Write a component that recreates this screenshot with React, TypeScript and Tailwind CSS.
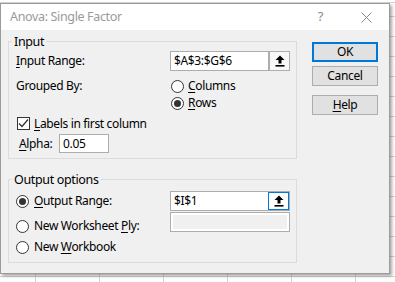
import React from 'react';

const Radio = ({ checked }: { checked?: boolean }) => (
  <span className="w-[13px] h-[13px] rounded-full border border-[#333333] bg-white flex items-center justify-center shrink-0">
    {checked && <span className="w-[7px] h-[7px] rounded-full bg-[#333333]" />}
  </span>
);

const UpArrow = () => (
  <svg width="10" height="12" viewBox="0 0 10 12">
    <path d="M5 0.5 L9.5 5 L6.5 5 L6.5 8.5 L3.5 8.5 L3.5 5 L0.5 5 Z" fill="#000" />
    <rect x="0.5" y="10" width="9" height="1.6" fill="#000" />
  </svg>
);

const RefEdit = ({ value, focused }: { value: string; focused?: boolean }) => (
  <div className="w-[120px] h-[20px] border border-[#adadad] bg-white flex">
    <div className="flex-1 pl-[3px] leading-[18px]">{value}</div>
    <div
      className={
        focused
          ? 'w-[21px] h-full flex items-center justify-center border border-[#0078d7] bg-white'
          : 'w-[21px] h-full flex items-center justify-center border-l-2 border-[#adadad] bg-[#f7f7f7]'
      }
    >
      <UpArrow />
    </div>
  </div>
);

const U = ({ children }: { children: React.ReactNode }) => <span className="underline underline-offset-2">{children}</span>;

const Button = ({ children, primary }: { children: React.ReactNode; primary?: boolean }) => (
  <div
    className={
      primary
        ? 'w-[66px] h-[20px] border-2 border-[#0078d7] bg-[#e1e1e1] flex items-center justify-center'
        : 'w-[66px] h-[20px] border border-[#adadad] bg-[#e1e1e1] flex items-center justify-center'
    }
  >
    {children}
  </div>
);

export default function App() {
  return (
    <div className="relative w-[395px] h-[282px] overflow-hidden bg-white font-['Noto_Sans',sans-serif] text-[12px] tracking-[-0.35px] text-black">
      {/* spreadsheet behind */}
      <div className="flex flex-col h-full">
        <div className="h-[3px] overflow-hidden relative text-[11px] text-[#444] border-b border-[#d4d4d4]">
          <div className="flex -mt-[11px] leading-[14px]">
            <span className="ml-[2px]">ults</span>
            <span className="ml-[289px]">Data Tools</span>
          </div>
        </div>
        <div className="flex-1 [background-image:linear-gradient(to_right,#d4d4d4_1px,transparent_1px),linear-gradient(to_bottom,#d4d4d4_1px,transparent_1px)] [background-size:64px_20px] [background-position:35px_13px]" />
      </div>

      {/* dialog */}
      <div className="absolute left-0 top-[3px] w-[390px] h-[271px] border border-[#9b9b9b] bg-[#f0f0f0] flex flex-col shadow-[2px_2px_3px_rgba(0,0,0,0.35)]">
        <div className="h-[26px] bg-white flex items-center shrink-0">
          <span className="ml-[9px] text-[#9a9a9a] text-[12.5px]">Anova: Single Factor</span>
          <span className="ml-auto mr-[38px] text-[#8a8a8a] text-[13px]">?</span>
          <svg width="11" height="11" viewBox="0 0 11 11" className="mr-[17px]">
            <path d="M0.5 0.5 L10.5 10.5 M10.5 0.5 L0.5 10.5" stroke="#8a8a8a" strokeWidth="1" />
          </svg>
        </div>

        <div className="flex flex-1">
          {/* left column */}
          <div className="pl-[7px] pt-[11px]">
            {/* Input group */}
            <div className="w-[289px] h-[118px] border border-[#dcdcdc] flex flex-col">
              <div className="-mt-[8px] ml-[3px] px-[2px] w-fit bg-[#f0f0f0] leading-[15px] text-[12.5px]">Input</div>
              <div className="mt-[2px] h-[20px] flex items-center pl-[7px]">
                <span className="w-[154px]">
                  <U>I</U>nput Range:
                </span>
                <RefEdit value="$A$3:$G$6" />
              </div>
              <div className="mt-[7px] h-[16px] flex items-center pl-[7px]">
                <span className="w-[155px]">Grouped By:</span>
                <Radio />
                <span className="ml-[4px]">
                  <U>C</U>olumns
                </span>
              </div>
              <div className="mt-[1px] h-[16px] flex items-center pl-[162px]">
                <Radio checked />
                <span className="ml-[4px]">
                  <U>R</U>ows
                </span>
              </div>
              <div className="mt-[4px] h-[17px] flex items-center pl-[8px]">
                <span className="w-[13px] h-[13px] border border-[#333333] bg-white flex items-center justify-center">
                  <svg width="11" height="11" viewBox="0 0 11 11">
                    <path d="M1 5.5 L4 8.5 L10 1.5" stroke="#333" strokeWidth="1.3" fill="none" />
                  </svg>
                </span>
                <span className="ml-[4px]">
                  <U>L</U>abels in first column
                </span>
              </div>
              <div className="mt-[2px] h-[19px] flex items-center pl-[10px]">
                <span className="w-[40px]">
                  <U>A</U>lpha:
                </span>
                <div className="w-[50px] h-[19px] border border-[#adadad] bg-white pl-[3px] leading-[17px]">0.05</div>
              </div>
            </div>

            {/* Output group */}
            <div className="mt-[20px] w-[289px] h-[84px] border border-[#dcdcdc] flex flex-col">
              <div className="-mt-[8px] ml-[3px] px-[2px] w-fit bg-[#f0f0f0] leading-[15px] text-[12.5px]">Output options</div>
              <div className="mt-[4px] h-[20px] flex items-center pl-[7px]">
                <div className="w-[154px] flex items-center">
                  <Radio checked />
                  <span className="ml-[5px]">
                    <U>O</U>utput Range:
                  </span>
                </div>
                <RefEdit value="$I$1" focused />
              </div>
              <div className="mt-[1px] h-[20px] flex items-start pl-[7px]">
                <div className="w-[154px] h-[16px] mt-[6px] flex items-center">
                  <Radio />
                  <span className="ml-[5px]">
                    New Worksheet <U>P</U>ly:
                  </span>
                </div>
                <div className="w-[120px] h-[20px] border border-[#adadad] bg-white p-[2px]">
                  <div className="w-full h-full bg-[#f0f0f0]" />
                </div>
              </div>
              <div className="mt-[7px] h-[16px] flex items-center pl-[7px]">
                <Radio />
                <span className="ml-[5px]">
                  New <U>W</U>orkbook
                </span>
              </div>
            </div>
          </div>

          {/* right column */}
          <div className="ml-[15px] pt-[12px] flex flex-col">
            <Button primary>OK</Button>
            <div className="mt-[4px]">
              <Button>Cancel</Button>
            </div>
            <div className="mt-[9px]">
              <Button>
                <span>
                  <U>H</U>elp
                </span>
              </Button>
            </div>
          </div>
        </div>
      </div>
    </div>
  );
}
